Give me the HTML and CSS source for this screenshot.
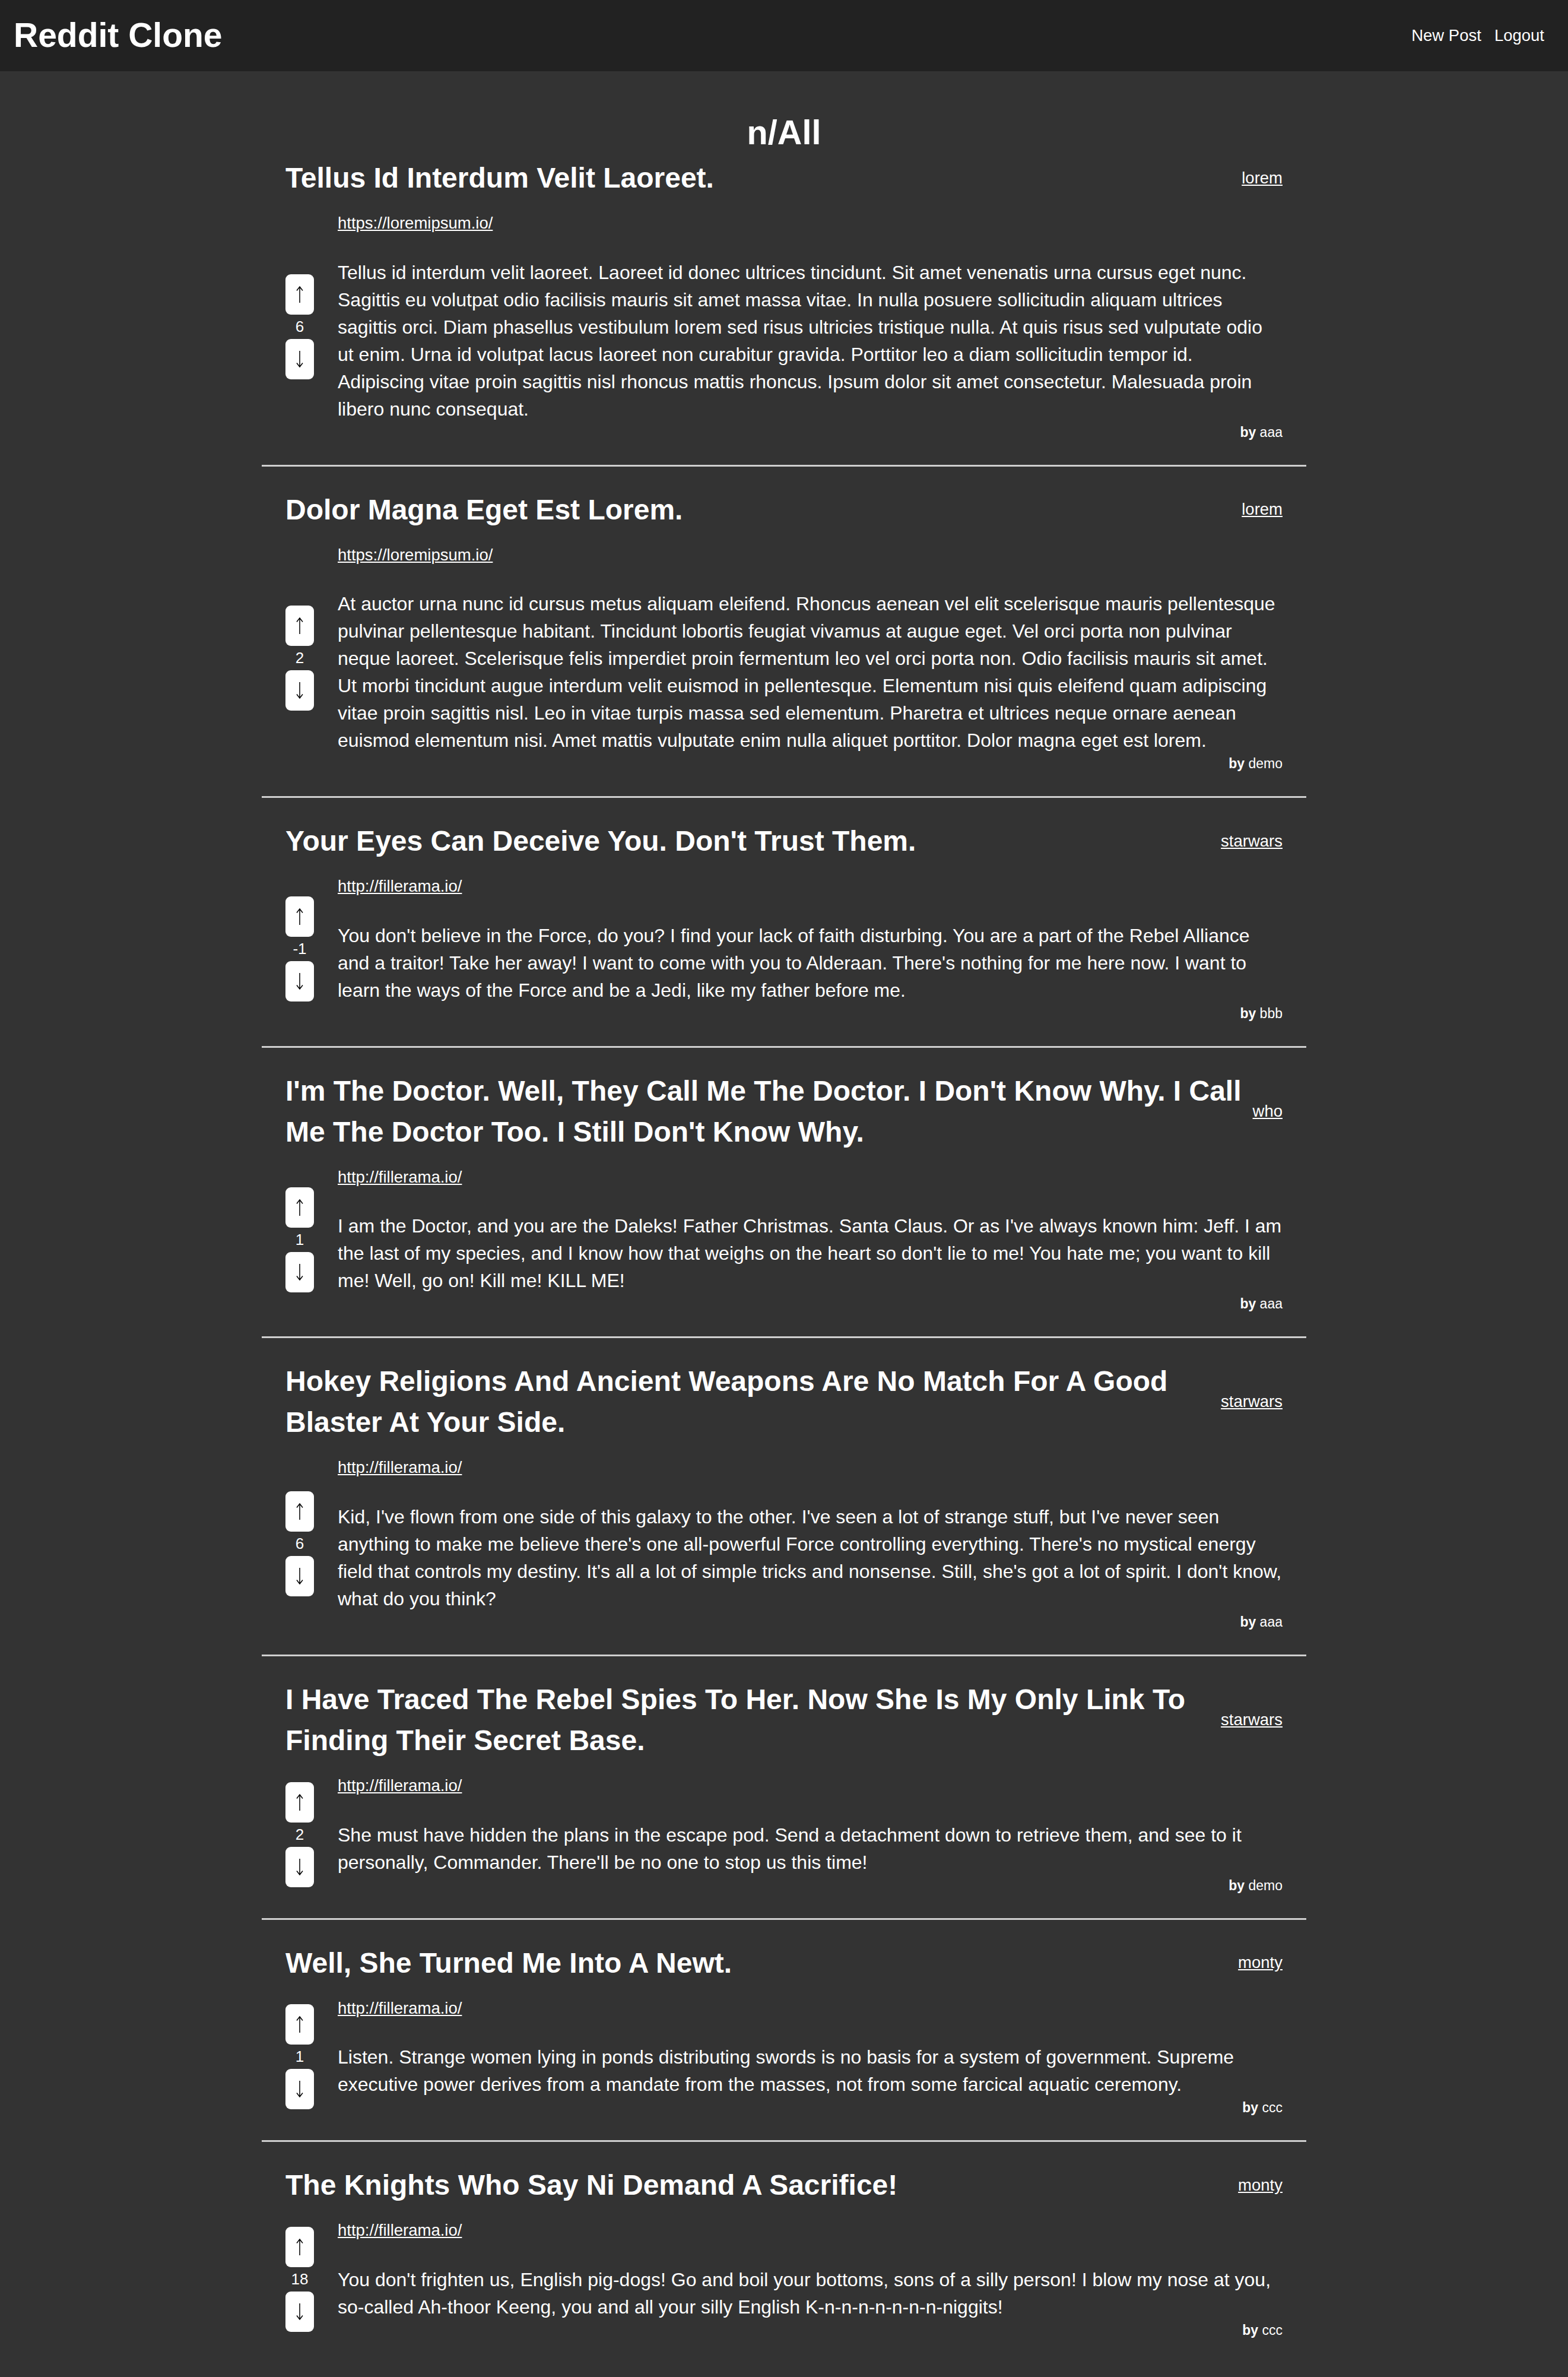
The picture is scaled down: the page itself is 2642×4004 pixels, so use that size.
FILE: index.html
```html
<!DOCTYPE html>
<html lang="en">
<head>
<meta charset="utf-8">
<title>Reddit Clone</title>
<link rel="stylesheet" href="styles.css">
</head>
<body>
<header class="topbar">
  <h1 class="brand">Reddit Clone</h1>
  <nav class="nav">
    <a href="#" class="nav-link">New Post</a>
    <a href="#" class="nav-link">Logout</a>
  </nav>
</header>
<main class="main">
  <h2 class="page-title">n/All</h2>

  <article class="post">
    <div class="post-head">
      <h3 class="post-title">Tellus Id Interdum Velit Laoreet.</h3>
      <a href="#" class="sub">lorem</a>
    </div>
    <div class="post-body">
      <div class="votes">
        <button class="vote-btn" aria-label="upvote"><svg class="arrow" viewBox="0 0 16 30"><path d="M8 29V2M3 8.5L8 2l5 6.5"/></svg></button>
        <span class="score">6</span>
        <button class="vote-btn" aria-label="downvote"><svg class="arrow" viewBox="0 0 16 30"><path d="M8 1v27M3 21.5L8 28l5-6.5"/></svg></button>
      </div>
      <div class="content">
        <a href="#" class="url">https://loremipsum.io/</a>
        <p class="text">Tellus id interdum velit laoreet. Laoreet id donec ultrices tincidunt. Sit amet venenatis urna cursus eget nunc. Sagittis eu volutpat odio facilisis mauris sit amet massa vitae. In nulla posuere sollicitudin aliquam ultrices sagittis orci. Diam phasellus vestibulum lorem sed risus ultricies tristique nulla. At quis risus sed vulputate odio ut enim. Urna id volutpat lacus laoreet non curabitur gravida. Porttitor leo a diam sollicitudin tempor id. Adipiscing vitae proin sagittis nisl rhoncus mattis rhoncus. Ipsum dolor sit amet consectetur. Malesuada proin libero nunc consequat.</p>
        <div class="byline"><b>by</b> aaa</div>
      </div>
    </div>
  </article>
  <hr class="sep">

  <article class="post">
    <div class="post-head">
      <h3 class="post-title">Dolor Magna Eget Est Lorem.</h3>
      <a href="#" class="sub">lorem</a>
    </div>
    <div class="post-body">
      <div class="votes">
        <button class="vote-btn" aria-label="upvote"><svg class="arrow" viewBox="0 0 16 30"><path d="M8 29V2M3 8.5L8 2l5 6.5"/></svg></button>
        <span class="score">2</span>
        <button class="vote-btn" aria-label="downvote"><svg class="arrow" viewBox="0 0 16 30"><path d="M8 1v27M3 21.5L8 28l5-6.5"/></svg></button>
      </div>
      <div class="content">
        <a href="#" class="url">https://loremipsum.io/</a>
        <p class="text">At auctor urna nunc id cursus metus aliquam eleifend. Rhoncus aenean vel elit scelerisque mauris pellentesque pulvinar pellentesque habitant. Tincidunt lobortis feugiat vivamus at augue eget. Vel orci porta non pulvinar neque laoreet. Scelerisque felis imperdiet proin fermentum leo vel orci porta non. Odio facilisis mauris sit amet. Ut morbi tincidunt augue interdum velit euismod in pellentesque. Elementum nisi quis eleifend quam adipiscing vitae proin sagittis nisl. Leo in vitae turpis massa sed elementum. Pharetra et ultrices neque ornare aenean euismod elementum nisi. Amet mattis vulputate enim nulla aliquet porttitor. Dolor magna eget est lorem.</p>
        <div class="byline"><b>by</b> demo</div>
      </div>
    </div>
  </article>
  <hr class="sep">

  <article class="post">
    <div class="post-head">
      <h3 class="post-title">Your Eyes Can Deceive You. Don't Trust Them.</h3>
      <a href="#" class="sub">starwars</a>
    </div>
    <div class="post-body">
      <div class="votes">
        <button class="vote-btn" aria-label="upvote"><svg class="arrow" viewBox="0 0 16 30"><path d="M8 29V2M3 8.5L8 2l5 6.5"/></svg></button>
        <span class="score">-1</span>
        <button class="vote-btn" aria-label="downvote"><svg class="arrow" viewBox="0 0 16 30"><path d="M8 1v27M3 21.5L8 28l5-6.5"/></svg></button>
      </div>
      <div class="content">
        <a href="#" class="url">http://fillerama.io/</a>
        <p class="text">You don't believe in the Force, do you? I find your lack of faith disturbing. You are a part of the Rebel Alliance and a traitor! Take her away! I want to come with you to Alderaan. There's nothing for me here now. I want to learn the ways of the Force and be a Jedi, like my father before me.</p>
        <div class="byline"><b>by</b> bbb</div>
      </div>
    </div>
  </article>
  <hr class="sep">

  <article class="post">
    <div class="post-head">
      <h3 class="post-title">I'm The Doctor. Well, They Call Me The Doctor. I Don't Know Why. I Call Me The Doctor Too. I Still Don't Know Why.</h3>
      <a href="#" class="sub">who</a>
    </div>
    <div class="post-body">
      <div class="votes">
        <button class="vote-btn" aria-label="upvote"><svg class="arrow" viewBox="0 0 16 30"><path d="M8 29V2M3 8.5L8 2l5 6.5"/></svg></button>
        <span class="score">1</span>
        <button class="vote-btn" aria-label="downvote"><svg class="arrow" viewBox="0 0 16 30"><path d="M8 1v27M3 21.5L8 28l5-6.5"/></svg></button>
      </div>
      <div class="content">
        <a href="#" class="url">http://fillerama.io/</a>
        <p class="text">I am the Doctor, and you are the Daleks! Father Christmas. Santa Claus. Or as I've always known him: Jeff. I am the last of my species, and I know how that weighs on the heart so don't lie to me! You hate me; you want to kill me! Well, go on! Kill me! KILL ME!</p>
        <div class="byline"><b>by</b> aaa</div>
      </div>
    </div>
  </article>
  <hr class="sep">

  <article class="post">
    <div class="post-head">
      <h3 class="post-title">Hokey Religions And Ancient Weapons Are No Match For A Good Blaster At Your Side.</h3>
      <a href="#" class="sub">starwars</a>
    </div>
    <div class="post-body">
      <div class="votes">
        <button class="vote-btn" aria-label="upvote"><svg class="arrow" viewBox="0 0 16 30"><path d="M8 29V2M3 8.5L8 2l5 6.5"/></svg></button>
        <span class="score">6</span>
        <button class="vote-btn" aria-label="downvote"><svg class="arrow" viewBox="0 0 16 30"><path d="M8 1v27M3 21.5L8 28l5-6.5"/></svg></button>
      </div>
      <div class="content">
        <a href="#" class="url">http://fillerama.io/</a>
        <p class="text">Kid, I've flown from one side of this galaxy to the other. I've seen a lot of strange stuff, but I've never seen anything to make me believe there's one all-powerful Force controlling everything. There's no mystical energy field that controls my destiny. It's all a lot of simple tricks and nonsense. Still, she's got a lot of spirit. I don't know, what do you think?</p>
        <div class="byline"><b>by</b> aaa</div>
      </div>
    </div>
  </article>
  <hr class="sep">

  <article class="post">
    <div class="post-head">
      <h3 class="post-title">I Have Traced The Rebel Spies To Her. Now She Is My Only Link To Finding Their Secret Base.</h3>
      <a href="#" class="sub">starwars</a>
    </div>
    <div class="post-body">
      <div class="votes">
        <button class="vote-btn" aria-label="upvote"><svg class="arrow" viewBox="0 0 16 30"><path d="M8 29V2M3 8.5L8 2l5 6.5"/></svg></button>
        <span class="score">2</span>
        <button class="vote-btn" aria-label="downvote"><svg class="arrow" viewBox="0 0 16 30"><path d="M8 1v27M3 21.5L8 28l5-6.5"/></svg></button>
      </div>
      <div class="content">
        <a href="#" class="url">http://fillerama.io/</a>
        <p class="text">She must have hidden the plans in the escape pod. Send a detachment down to retrieve them, and see to it personally, Commander. There'll be no one to stop us this time!</p>
        <div class="byline"><b>by</b> demo</div>
      </div>
    </div>
  </article>
  <hr class="sep">

  <article class="post">
    <div class="post-head">
      <h3 class="post-title">Well, She Turned Me Into A Newt.</h3>
      <a href="#" class="sub">monty</a>
    </div>
    <div class="post-body">
      <div class="votes">
        <button class="vote-btn" aria-label="upvote"><svg class="arrow" viewBox="0 0 16 30"><path d="M8 29V2M3 8.5L8 2l5 6.5"/></svg></button>
        <span class="score">1</span>
        <button class="vote-btn" aria-label="downvote"><svg class="arrow" viewBox="0 0 16 30"><path d="M8 1v27M3 21.5L8 28l5-6.5"/></svg></button>
      </div>
      <div class="content">
        <a href="#" class="url">http://fillerama.io/</a>
        <p class="text">Listen. Strange women lying in ponds distributing swords is no basis for a system of government. Supreme executive power derives from a mandate from the masses, not from some farcical aquatic ceremony.</p>
        <div class="byline"><b>by</b> ccc</div>
      </div>
    </div>
  </article>
  <hr class="sep">

  <article class="post">
    <div class="post-head">
      <h3 class="post-title">The Knights Who Say Ni Demand A Sacrifice!</h3>
      <a href="#" class="sub">monty</a>
    </div>
    <div class="post-body">
      <div class="votes">
        <button class="vote-btn" aria-label="upvote"><svg class="arrow" viewBox="0 0 16 30"><path d="M8 29V2M3 8.5L8 2l5 6.5"/></svg></button>
        <span class="score">18</span>
        <button class="vote-btn" aria-label="downvote"><svg class="arrow" viewBox="0 0 16 30"><path d="M8 1v27M3 21.5L8 28l5-6.5"/></svg></button>
      </div>
      <div class="content">
        <a href="#" class="url">http://fillerama.io/</a>
        <p class="text">You don't frighten us, English pig-dogs! Go and boil your bottoms, sons of a silly person! I blow my nose at you, so-called Ah-thoor Keeng, you and all your silly English K-n-n-n-n-n-n-n-niggits!</p>
        <div class="byline"><b>by</b> ccc</div>
      </div>
    </div>
  </article>
</main>
</body>
</html>
```

FILE: styles.css
```css
* {
  box-sizing: border-box;
}

html, body {
  margin: 0;
  padding: 0;
}

body {
  background: #333333;
  color: #ffffff;
  font-family: "Liberation Sans", Arial, Helvetica, sans-serif;
}

a {
  color: #ffffff;
}

.topbar {
  display: flex;
  justify-content: space-between;
  align-items: center;
  height: 120px;
  padding: 0 40px 0 23px;
  background: #222222;
}

.brand {
  margin: 0;
  font-size: 57px;
  font-weight: bold;
  line-height: 1.15;
}

.nav {
  display: flex;
  gap: 22px;
  font-size: 27.5px;
}

.nav-link {
  text-decoration: none;
}

.main {
  width: 1760px;
  margin: 0 auto;
  padding: 62px 0 62px;
}

.page-title {
  margin: 0;
  font-size: 57.6px;
  line-height: 83px;
  font-weight: bold;
  text-align: center;
}

.post {
  padding: 0 40px;
}

.sep {
  border: 0;
  height: 3px;
  background: #cfcfcf;
  margin: 38px 0;
}

.post-head {
  display: flex;
  align-items: center;
  gap: 16px;
}

.post-title {
  flex: 1;
  margin: 0;
  font-size: 48px;
  line-height: 69px;
  font-weight: bold;
}

.sub {
  flex: none;
  font-size: 27.5px;
  line-height: 40px;
}

.post-body {
  display: flex;
  align-items: center;
  gap: 40px;
  margin-top: 22px;
}

.votes {
  flex: none;
  width: 48px;
  display: flex;
  flex-direction: column;
  align-items: center;
}

.vote-btn {
  display: flex;
  align-items: center;
  justify-content: center;
  width: 48px;
  height: 68px;
  padding: 0;
  border: 0;
  border-radius: 9px;
  background: #ffffff;
  color: #000000;
}

.arrow {
  width: 16px;
  height: 30px;
  fill: none;
  stroke: #000000;
  stroke-width: 1.5;
}

.score {
  font-size: 26px;
  line-height: 41px;
  color: #ffffff;
}

.content {
  flex: 1;
  min-width: 0;
}

.url {
  display: block;
  width: max-content;
  font-size: 27.5px;
  line-height: 39.6px;
}

.text {
  margin: 40px 0 0;
  font-size: 32px;
  line-height: 46px;
}

.byline {
  font-size: 23px;
  line-height: 33px;
  text-align: right;
}
```
